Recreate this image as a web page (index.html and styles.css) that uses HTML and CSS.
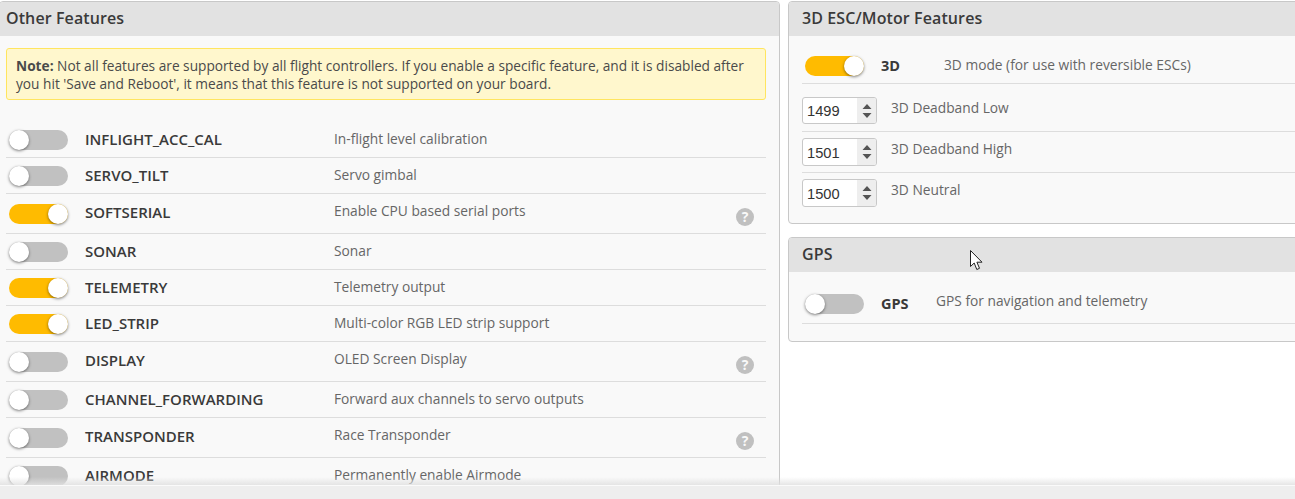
FILE: index.html
```html
<!DOCTYPE html>
<html lang="en">
<head>
<meta charset="utf-8">
<title>Features</title>
<link rel="stylesheet" href="styles.css">
</head>
<body>
<div class="page">
  <main class="content">
    <section class="panel panel-left">
      <h2 class="panel-title">Other Features</h2>
      <div class="panel-body">
        <p class="note"><b>Note:</b> Not all features are supported by all flight controllers. If you enable a specific feature, and it is disabled after you hit 'Save and Reboot', it means that this feature is not supported on your board.</p>
        <div class="rows">
          <div class="row"><span class="toggle"></span><span class="name">INFLIGHT_ACC_CAL</span><span class="desc">In-flight level calibration</span></div>
          <div class="row"><span class="toggle"></span><span class="name">SERVO_TILT</span><span class="desc">Servo gimbal</span></div>
          <div class="row row-help"><span class="toggle on"></span><span class="name">SOFTSERIAL</span><span class="desc">Enable CPU based serial ports</span><span class="help">?</span></div>
          <div class="row"><span class="toggle"></span><span class="name">SONAR</span><span class="desc">Sonar</span></div>
          <div class="row"><span class="toggle on"></span><span class="name">TELEMETRY</span><span class="desc">Telemetry output</span></div>
          <div class="row"><span class="toggle on"></span><span class="name">LED_STRIP</span><span class="desc">Multi-color RGB LED strip support</span></div>
          <div class="row row-help"><span class="toggle"></span><span class="name">DISPLAY</span><span class="desc">OLED Screen Display</span><span class="help">?</span></div>
          <div class="row"><span class="toggle"></span><span class="name">CHANNEL_FORWARDING</span><span class="desc">Forward aux channels to servo outputs</span></div>
          <div class="row row-help"><span class="toggle"></span><span class="name">TRANSPONDER</span><span class="desc">Race Transponder</span><span class="help">?</span></div>
          <div class="row"><span class="toggle"></span><span class="name">AIRMODE</span><span class="desc">Permanently enable Airmode</span></div>
        </div>
      </div>
    </section>
    <div class="side">
      <section class="panel panel-3d">
        <h2 class="panel-title">3D ESC/Motor Features</h2>
        <div class="side-body">
          <div class="side-row side-row-3d"><span class="toggle on"></span><span class="side-name name-3d">3D</span><span class="desc">3D mode (for use with reversible ESCs)</span></div>
          <div class="side-row num-row"><span class="num"><span class="num-value">1499</span><span class="spin"><svg class="spin-icon" viewBox="0 0 10 20"><path d="M5 3 9.500 8H.5zM5 17 .5 12H9.500z"/></svg></span></span><span class="desc">3D Deadband Low</span></div>
          <div class="side-row num-row"><span class="num"><span class="num-value">1501</span><span class="spin"><svg class="spin-icon" viewBox="0 0 10 20"><path d="M5 3 9.500 8H.5zM5 17 .5 12H9.500z"/></svg></span></span><span class="desc">3D Deadband High</span></div>
          <div class="side-row num-row num-last"><span class="num"><span class="num-value">1500</span><span class="spin"><svg class="spin-icon" viewBox="0 0 10 20"><path d="M5 3 9.500 8H.5zM5 17 .5 12H9.500z"/></svg></span></span><span class="desc">3D Neutral</span></div>
        </div>
      </section>
      <section class="panel panel-gps">
        <h2 class="panel-title">GPS</h2>
        <div class="side-body">
          <div class="side-row gps-row"><span class="toggle"></span><span class="side-name name-gps">GPS</span><span class="desc">GPS for navigation and telemetry</span></div>
        </div>
      </section>
    </div>
  </main>
  <div class="fade"></div>
  <footer class="bottom"></footer>
  <svg class="cursor" width="14" height="21" viewBox="0 0 14 21"><path d="M.5.5V16.500L4.200 13 6.800 19.500 9.500 18.300 6.900 12.200H12z" fill="#fff" stroke="#222" stroke-width="1"/></svg>
</div>
</body>
</html>
```

FILE: styles.css
```css
* { box-sizing: border-box; }
html, body { margin: 0; height: 100%; overflow: hidden; background: #fff; }
body { font-family: "Open Sans", sans-serif; font-size: 13px; color: #666; }

.page { position: relative; height: 499px; display: flex; flex-direction: column; overflow: hidden; }
.content { flex: 1; min-height: 0; display: flex; align-items: flex-start; gap: 8px; padding-top: 1px; overflow: hidden; margin-left: -1px; }

.panel { background: #f9f9f9; border: 1px solid #c8c8c8; border-radius: 4px; overflow: hidden; }
.panel-left { width: 781px; flex: none; height: 560px; }
.panel-title { margin: 0; height: 34px; background: #e2e2e2; color: #3a3a3a; font-size: 16px; font-weight: 600; line-height: 33px; padding-left: 6px; letter-spacing: .1px; }
.panel-3d .panel-title, .panel-gps .panel-title { padding-left: 13px; }
.panel-body { padding: 12px 13px 0 6px; }

.note { margin: 0; height: 52px; padding: 8px 9px; background: #fff7cd; border: 1px solid #ffe55f; border-radius: 3px; color: #4a4a4a; font-size: 13.700px; line-height: 18px; }
.note b { font-weight: 700; }

.rows { margin-top: 22px; }
.row { display: flex; align-items: flex-start; height: 36px; border-bottom: 1px solid #ddd; padding-top: 8px; position: relative; }
.row-help { height: 40px; }

.toggle { display: block; flex: none; width: 59px; height: 20px; margin-left: 3px; border-radius: 10px; background: #c1c1c1; position: relative; }
.toggle::after { content: ""; position: absolute; left: 0; top: 0; width: 20px; height: 20px; border-radius: 50%; background: #fff; box-shadow: 0 1px 3px rgba(0,0,0,.5); }
.toggle.on { background: #ffbb00; }
.toggle.on::after { left: 39px; }

.name { flex: none; width: 249px; margin-left: 17px; color: #3a3a3a; font-size: 15px; font-weight: 600; line-height: 18px; }
.row-help .name { padding-top: 1px; }
.row-help .toggle { margin-top: 2px; }
.desc { color: #666; font-size: 13.750px; line-height: 18px; white-space: nowrap; }
.help { position: absolute; left: 730px; top: 14px; width: 18px; height: 18px; border-radius: 50%; background: #c0c0c0; color: #f9f9f9; font-size: 14px; font-weight: 700; line-height: 18px; text-align: center; }

.side { flex: none; width: 520px; display: flex; flex-direction: column; gap: 13px; }
.panel-3d { height: 223px; }
.panel-gps { height: 105px; }
.side-body { padding: 0 0 0 13px; }
.side-row { display: flex; align-items: flex-start; border-bottom: 1px solid #ddd; }
.side-row .toggle { margin-left: 3px; }

.side-row-3d { height: 48px; padding-top: 20px; }
.name-3d { width: 63px; }
.side-name { flex: none; margin-left: 17px; color: #3a3a3a; font-size: 14.500px; font-weight: 700; line-height: 20px; }
.name-gps { width: 55px; }
.gps-row { height: 52px; padding-top: 22px; }
.gps-row .desc { margin-top: -2px; }

.num-row { height: 41px; padding-top: 6px; }
.side-row-3d + .num-row { height: 48px; padding-top: 13px; }
.side-row-3d + .num-row .num { height: 27px; }
.side-row-3d + .num-row .num-value { line-height: 26px; }
.num-last { border-bottom: 0; }
.num { display: flex; width: 75px; height: 28px; flex: none; background: #fff; border: 1px solid #c8c8c8; border-radius: 3px; overflow: hidden; color: #333; font-family: "Liberation Sans", Arial, sans-serif; font-size: 14.670px; margin-right: 14px; }
.num-value { flex: 1; padding-left: 4px; line-height: 28px; }
.spin { width: 19px; background: #eee; display: flex; align-items: center; justify-content: center; }
.spin-icon { width: 10px; height: 20px; fill: #555; }
.num-row .desc { line-height: 17px; margin-top: 2px; }

.fade { position: absolute; left: 0; right: 0; top: 477px; height: 8px; background: linear-gradient(rgba(230,230,230,0), rgba(225,225,225,.85)); }
.bottom { flex: none; height: 14px; background: #eee; border-top: 1px solid #fafafa; position: relative; }
.cursor { position: absolute; left: 970px; top: 250px; }
```
